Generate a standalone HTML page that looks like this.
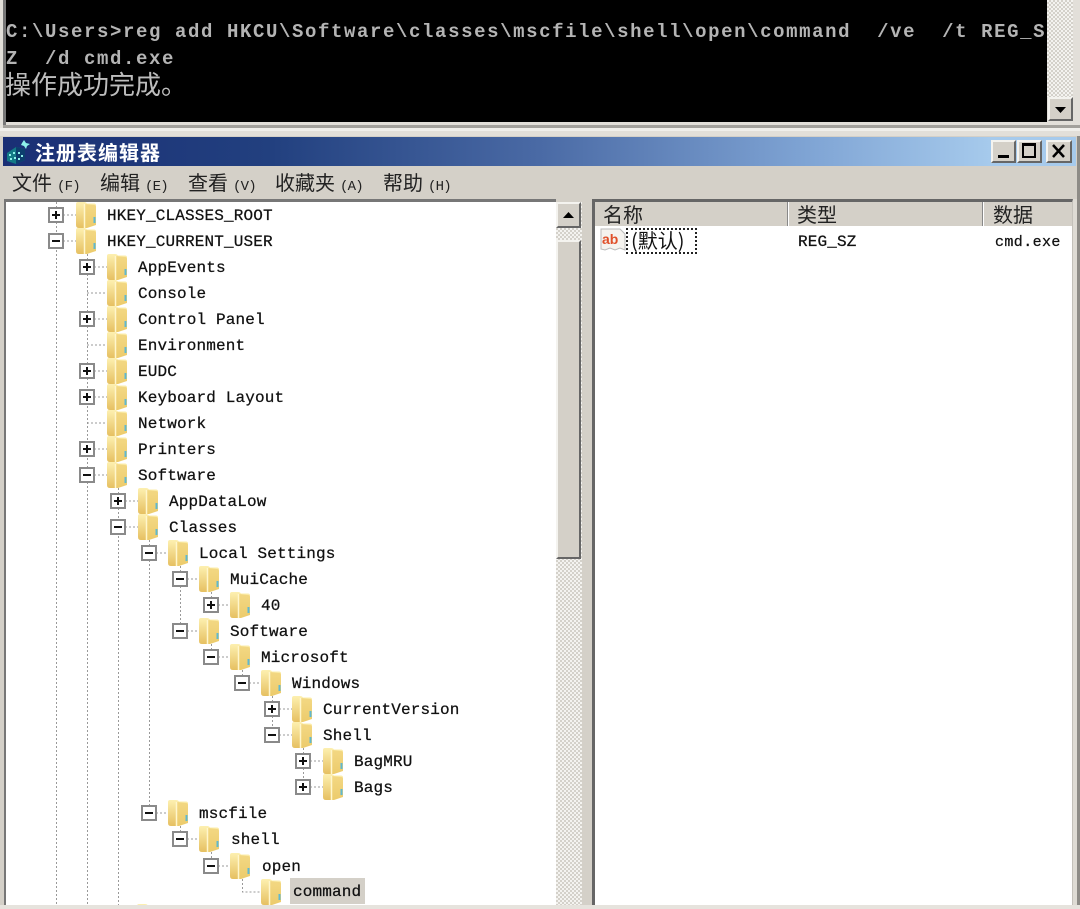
<!DOCTYPE html>
<html><head><meta charset="utf-8">
<style>
html,body{margin:0;padding:0;background:#fff}
#p{position:relative;width:1080px;height:909px;overflow:hidden;background:#d4d0c8;filter:blur(.35px)}
.a{position:absolute}
.t{position:absolute;margin-top:1px;font:16px/26px "Liberation Mono","Noto Sans CJK SC",monospace;color:#111;white-space:pre;letter-spacing:.15px;height:26px;-webkit-text-stroke:.25px #111}
.con{position:absolute;left:6px;font:bold 19px/26px "Liberation Mono",monospace;letter-spacing:1.6px;color:#b4b4b4;white-space:pre}
.m{position:absolute;top:168px;font:20px/28px "WenQuanYi Zen Hei","Noto Sans CJK SC",sans-serif;color:#222;white-space:pre}
.m small{font:14px "Liberation Mono",monospace;letter-spacing:-.8px;margin-left:5px}
.chk{position:absolute;background-color:#f4f3f0;background-image:linear-gradient(45deg,#d4d1ca 25%,transparent 25%,transparent 75%,#d4d1ca 75%),linear-gradient(45deg,#d4d1ca 25%,transparent 25%,transparent 75%,#d4d1ca 75%);background-size:4px 4px;background-position:0 0,2px 2px}
.btn{position:absolute;background:#d4d0c8;box-sizing:border-box;border:2px solid;border-color:#f4f3ef #666 #666 #f4f3ef}
.h{position:absolute;top:200px;font:20px/28px "WenQuanYi Zen Hei","Noto Sans CJK SC",sans-serif;color:#222}
</style></head><body><div id="p">

<div class="a" style="left:0;top:0;width:1080px;height:136px;background:#e2dfd9"></div>
<div class="a" style="left:3px;top:0;width:3px;height:126px;background:#777"></div>
<div class="a" style="left:6px;top:0;width:1041px;height:122px;background:#000"></div>
<div class="a" style="left:3px;top:125px;width:1077px;height:3px;background:#a3a19c"></div>
<div class="a" style="left:0;top:128px;width:1080px;height:3px;background:#f0efeb"></div>
<div class="con" style="top:19px">C:\Users&gt;reg add HKCU\Software\classes\mscfile\shell\open\command  /ve  /t REG_S</div>
<div class="con" style="top:46px">Z  /d cmd.exe</div>
<div class="a" style="left:5px;top:68px;font:26px/32px 'WenQuanYi Zen Hei','Noto Sans CJK SC',sans-serif;color:#bdbdbd;white-space:pre">操作成功完成。</div>
<div class="chk" style="left:1047px;top:0;width:26px;height:97px"></div>
<div class="btn" style="left:1048px;top:97px;width:25px;height:24px"></div>
<svg class="a" style="left:1048px;top:97px" width="25" height="24"><path d="M7 10h11l-5.500 6z" fill="#000"/></svg>

<div class="a" style="left:3px;top:137px;width:1073px;height:29px;background:linear-gradient(90deg,#1a2f75 0,#22407f 25%,#4a6aa5 50%,#7fa4d4 75%,#a6caec 92%,#a6caec 100%)"></div>
<svg class="a" style="left:6px;top:139px" width="26" height="26" viewBox="0 0 26 26">
<path d="M1 14l9-6 9 2v11l-9 4-9-3z" fill="#137a86"/>
<path d="M10 8l9 2v11l-9 4z" fill="#0c3f6e"/>
<path d="M3 15h2v2H3zM7 13h2v2H7zM4 19h2v2H4zM8 18h2v2H8zM12 13h2v2h-2zM15 16h2v2h-2zM12 19h2v2h-2zM16 4l2-3 2 3 4 1-3 2-1 3-2-3-3-1z" fill="#8ef0ea"/>
</svg>
<div class="a" style="left:35px;top:137px;font:bold 20px/29px 'WenQuanYi Zen Hei','Noto Sans CJK SC',sans-serif;color:#fff;white-space:pre;letter-spacing:1px">注册表编辑器</div>
<div class="btn" style="left:991px;top:140px;width:25px;height:23px"></div>
<div class="a" style="left:998px;top:155px;width:11px;height:3px;background:#000"></div>
<div class="btn" style="left:1017px;top:140px;width:25px;height:23px"></div>
<div class="a" style="left:1022px;top:143px;width:14px;height:15px;box-sizing:border-box;border:2px solid #000;border-top-width:3px"></div>
<div class="btn" style="left:1046px;top:140px;width:26px;height:23px"></div>
<svg class="a" style="left:1046px;top:140px" width="26" height="23"><path d="M7 5l11 12M18 5L7 17" stroke="#000" stroke-width="2.500" fill="none"/></svg>

<div class="m" style="left:12px">文件<small>(F)</small></div>
<div class="m" style="left:100px">编辑<small>(E)</small></div>
<div class="m" style="left:188px">查看<small>(V)</small></div>
<div class="m" style="left:275px">收藏夹<small>(A)</small></div>
<div class="m" style="left:383px">帮助<small>(H)</small></div>

<div class="a" style="left:4px;top:199px;width:552px;height:706px;background:#fff;box-sizing:border-box;border-left:2px solid #777;border-top:3px solid #777"></div>

<svg class="a" style="left:0;top:0" width="560" height="909" shape-rendering="crispEdges">
<defs>
<linearGradient id="g" x1="0" x2="0" y1="0" y2="1"><stop offset="0" stop-color="#fdf0b0"/><stop offset="1" stop-color="#e6c061"/></linearGradient>
<linearGradient id="g2" x1="0" x2="0" y1="0" y2="1"><stop offset="0" stop-color="#f3d883"/><stop offset="1" stop-color="#eccb6c"/></linearGradient>
<g id="f" shape-rendering="auto"><path d="M0 2q0-2 2-2h6q2 0 3 1.500h7q2 0 2 2v18q0 1-2 1.500l-7 2.500q-2 .5-3 .5H3q-3 0-3-3z" fill="url(#g)"/><path d="M9 2l9 1q2 0 2 2v18l-9 3H9z" fill="url(#g2)"/><path d="M8.500 2v24" stroke="#fff6cc" stroke-width="1.500"/><rect x="17.500" y="15" width="2" height="6" fill="#5fb8d0"/></g>
<g id="b"><rect x="0" y="0" width="14" height="14" fill="#fff" stroke="#8a8a8a" stroke-width="2"/><rect x="3" y="6" width="8" height="2" fill="#111"/></g>
<g id="pl"><use href="#b"/><rect x="6" y="3" width="2" height="8" fill="#111"/></g>
</defs>
<g stroke="#999" stroke-width="1" stroke-dasharray="2 2" fill="none">
<path d="M56.500 202V905M87.500 254V905M118.500 488V905M149.500 540V806M180.500 566V631M211.500 592V605M211.500 644V657M242.500 670V683M272.500 696V735M303.500 748V787M180.500 826V839M211.500 852V866M242.500 879V892H262"/>
<path d="M63 215H76M63 241H76M94 267H107M87 293H107M94 319H107M87 345H107M94 371H107M94 397H107M87 423H107M94 449H107M94 475H107M125 501H138M125 527H138M156 553H169M187 579H200M218 605H231M187 631H200M218 657H231M249 683H262M279 709H293M279 735H293M310 761H324M310 787H324M156 813H169M187 839H200M218 866H231"/>
</g>
<use href="#pl" x="49" y="208"/><use href="#f" x="76" y="202"/>
<use href="#b" x="49" y="234"/><use href="#f" x="76" y="228"/>
<use href="#pl" x="80" y="260"/><use href="#f" x="107" y="254"/>
<use href="#f" x="107" y="280"/>
<use href="#pl" x="80" y="312"/><use href="#f" x="107" y="306"/>
<use href="#f" x="107" y="332"/>
<use href="#pl" x="80" y="364"/><use href="#f" x="107" y="358"/>
<use href="#pl" x="80" y="390"/><use href="#f" x="107" y="384"/>
<use href="#f" x="107" y="410"/>
<use href="#pl" x="80" y="442"/><use href="#f" x="107" y="436"/>
<use href="#b" x="80" y="468"/><use href="#f" x="107" y="462"/>
<use href="#pl" x="111" y="494"/><use href="#f" x="138" y="488"/>
<use href="#b" x="111" y="520"/><use href="#f" x="138" y="514"/>
<use href="#b" x="142" y="546"/><use href="#f" x="168" y="540"/>
<use href="#b" x="173" y="572"/><use href="#f" x="199" y="566"/>
<use href="#pl" x="204" y="598"/><use href="#f" x="230" y="592"/>
<use href="#b" x="173" y="624"/><use href="#f" x="199" y="618"/>
<use href="#b" x="204" y="650"/><use href="#f" x="230" y="644"/>
<use href="#b" x="235" y="676"/><use href="#f" x="261" y="670"/>
<use href="#pl" x="265" y="702"/><use href="#f" x="292" y="696"/>
<use href="#b" x="265" y="728"/><use href="#f" x="292" y="722"/>
<use href="#pl" x="296" y="754"/><use href="#f" x="323" y="748"/>
<use href="#pl" x="296" y="780"/><use href="#f" x="323" y="774"/>
<use href="#b" x="142" y="806"/><use href="#f" x="168" y="800"/>
<use href="#b" x="173" y="832"/><use href="#f" x="199" y="826"/>
<use href="#b" x="204" y="859"/><use href="#f" x="230" y="853"/>
<use href="#f" x="261" y="879"/>
<use href="#f" x="137" y="904"/>
</svg>

<div class="t" style="left:107px;top:202px">HKEY_CLASSES_ROOT</div>
<div class="t" style="left:107px;top:228px">HKEY_CURRENT_USER</div>
<div class="t" style="left:138px;top:254px">AppEvents</div>
<div class="t" style="left:138px;top:280px">Console</div>
<div class="t" style="left:138px;top:306px">Control Panel</div>
<div class="t" style="left:138px;top:332px">Environment</div>
<div class="t" style="left:138px;top:358px">EUDC</div>
<div class="t" style="left:138px;top:384px">Keyboard Layout</div>
<div class="t" style="left:138px;top:410px">Network</div>
<div class="t" style="left:138px;top:436px">Printers</div>
<div class="t" style="left:138px;top:462px">Software</div>
<div class="t" style="left:169px;top:488px">AppDataLow</div>
<div class="t" style="left:169px;top:514px">Classes</div>
<div class="t" style="left:199px;top:540px">Local Settings</div>
<div class="t" style="left:230px;top:566px">MuiCache</div>
<div class="t" style="left:261px;top:592px">40</div>
<div class="t" style="left:230px;top:618px">Software</div>
<div class="t" style="left:261px;top:644px">Microsoft</div>
<div class="t" style="left:292px;top:670px">Windows</div>
<div class="t" style="left:323px;top:696px">CurrentVersion</div>
<div class="t" style="left:323px;top:722px">Shell</div>
<div class="t" style="left:354px;top:748px">BagMRU</div>
<div class="t" style="left:354px;top:774px">Bags</div>
<div class="t" style="left:199px;top:800px">mscfile</div>
<div class="t" style="left:231px;top:826px">shell</div>
<div class="t" style="left:262px;top:853px">open</div>
<div class="a" style="left:290px;top:878px;width:75px;height:26px;background:#d4d0c8"></div>
<div class="t" style="left:293px;top:878px">command</div>

<div class="chk" style="left:556px;top:202px;width:26px;height:703px"></div>
<div class="btn" style="left:556px;top:202px;width:25px;height:26px"></div>
<svg class="a" style="left:556px;top:202px" width="25" height="26"><path d="M7 16h11l-5.500-6z" fill="#000"/></svg>
<div class="btn" style="left:556px;top:240px;width:25px;height:319px"></div>

<div class="a" style="left:592px;top:199px;width:481px;height:706px;box-sizing:border-box;border-left:3px solid #666;border-top:3px solid #666;border-right:1px solid #c4c1ba;background:#fff"></div>
<div class="a" style="left:595px;top:202px;width:477px;height:24px;background:#d4d0c8"></div>
<div class="a" style="left:787px;top:202px;width:1px;height:24px;background:#888"></div>
<div class="a" style="left:788px;top:202px;width:1px;height:24px;background:#fff"></div>
<div class="a" style="left:982px;top:202px;width:1px;height:24px;background:#888"></div>
<div class="a" style="left:983px;top:202px;width:1px;height:24px;background:#fff"></div>
<div class="h" style="left:603px">名称</div>
<div class="h" style="left:797px">类型</div>
<div class="h" style="left:993px">数据</div>
<svg class="a" style="left:600px;top:227px" width="26" height="26"><path d="M1 2h19l5 5v16l-5-2-5 2-5-2-5 2-4-1z" fill="#f5f3ef" stroke="#bbb"/><text x="2" y="17" font-family="Liberation Sans,sans-serif" font-weight="bold" font-size="14" fill="#e0502a">ab</text></svg>
<div class="a" style="left:626px;top:228px;width:71px;height:26px;box-sizing:border-box;border:2px dotted #222"></div>
<div class="a" style="left:631px;top:226px;font:20px/28px 'WenQuanYi Zen Hei','Noto Sans CJK SC',sans-serif;color:#111;white-space:pre">(默认)</div>
<div class="t" style="left:798px;top:228px">REG_SZ</div>
<div class="t" style="left:995px;top:229px;font-size:15px;letter-spacing:.4px">cmd.exe</div>

<div class="a" style="left:1073px;top:199px;width:4px;height:706px;background:#dedbd4"></div>
<div class="a" style="left:1077px;top:136px;width:3px;height:770px;background:#8d8b86"></div>
<div class="a" style="left:0;top:905px;width:1080px;height:4px;background:#e6e3dd"></div>
</div></body></html>
